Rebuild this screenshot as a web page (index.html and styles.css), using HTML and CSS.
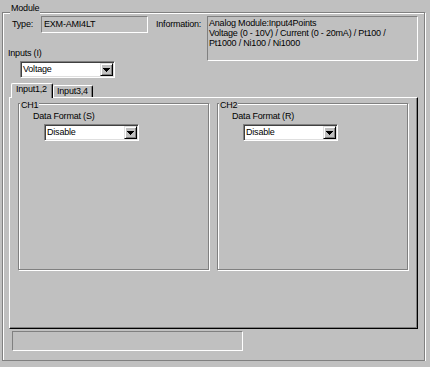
FILE: index.html
```html
<!DOCTYPE html>
<html lang="en">
<head>
  <meta charset="UTF-8">
  <title>Module</title>
  <link rel="stylesheet" href="styles.css">
</head>
<body>
  <div class="module group">
    <span class="caption module-caption">Module</span>

    <div class="top">
      <div class="left-col">
        <div class="type-row">
          <span class="type-label">Type:</span>
          <div class="readonly type-box">EXM-AMI4LT</div>
        </div>
        <div class="inputs-label">Inputs (I)</div>
        <div class="combo input-combo">
          <span class="combo-text">Voltage</span>
          <span class="combo-btn"><svg width="7" height="4" viewBox="0 0 7 4"><path d="M0 0h7L3.5 4z" fill="#000"/></svg></span>
        </div>
      </div>
      <span class="info-label">Information:</span>
      <div class="readonly info-box">Analog Module:Input4Points<br>Voltage (0 - 10V) / Current (0 - 20mA) / Pt100 /<br>Pt1000 / Ni100 / Ni1000</div>
    </div>

    <div class="tabs">
      <div class="tab active">Input1,2</div>
      <div class="tab">Input3,4</div>
    </div>

    <div class="pane">
      <div class="group ch">
        <span class="caption ch-caption">CH1</span>
        <div class="field-label">Data Format (S)</div>
        <div class="combo ch-combo">
          <span class="combo-text">Disable</span>
          <span class="combo-btn"><svg width="7" height="4" viewBox="0 0 7 4"><path d="M0 0h7L3.5 4z" fill="#000"/></svg></span>
        </div>
      </div>
      <div class="group ch">
        <span class="caption ch-caption">CH2</span>
        <div class="field-label">Data Format (R)</div>
        <div class="combo ch-combo">
          <span class="combo-text">Disable</span>
          <span class="combo-btn"><svg width="7" height="4" viewBox="0 0 7 4"><path d="M0 0h7L3.5 4z" fill="#000"/></svg></span>
        </div>
      </div>
    </div>

    <div class="readonly status"></div>
  </div>
</body>
</html>
```

FILE: styles.css
```css
* {
  box-sizing: border-box;
}
body {
  margin: 0;
  background: #c0c0c0;
  font-family: "Liberation Sans", Arial, sans-serif;
  font-size: 9px;
  line-height: 10px;
  letter-spacing: -0.2px;
  color: #000;
}

/* etched group box */
.group {
  position: relative;
  border: 1px solid #808080;
  box-shadow: 1px 1px 0 #fff, inset 1px 1px 0 #fff;
}
.caption {
  position: absolute;
  padding: 0 1px;
  line-height: 11px;
  background: #c0c0c0;
}
.module {
  margin: 12px 0 0 2px;
  width: 423px;
  height: 349px;
}
.module-caption {
  top: -10px;
  left: 7px;
}

.readonly {
  background: #c0c0c0;
  border: 1px solid;
  border-color: #808080 #fff #fff #808080;
}

.top {
  display: flex;
  align-items: flex-start;
  margin-top: 3px;
  padding-left: 5px;
}
.left-col {
  width: 140px;
}
.type-row {
  display: flex;
  padding-left: 4px;
}
.type-label {
  width: 29px;
  line-height: 17px;
}
.type-box {
  width: 107px;
  height: 17px;
  line-height: 15px;
  padding-left: 2px;
}
.inputs-label {
  margin-top: 15px;
}
.info-label {
  width: 51px;
  margin-left: 8px;
  line-height: 17px;
}
.info-box {
  width: 211px;
  height: 45px;
  padding: 1px 0 0 1px;
  white-space: nowrap;
}

/* combo box */
.combo {
  display: flex;
  width: 95px;
  height: 17px;
  margin-top: 3px;
  padding: 1px;
  background: #fff;
  border: 1px solid;
  border-color: #808080 #fff #fff #808080;
  box-shadow: inset 1px 1px 0 #404040, inset -1px -1px 0 #dfdfdf;
}
.input-combo {
  margin-left: 12px;
}
.ch-combo {
  margin-left: 11px;
}
.combo-text {
  flex: 1;
  padding-left: 1px;
  line-height: 13px;
}
.combo-btn {
  display: flex;
  align-items: center;
  justify-content: center;
  width: 13px;
  height: 13px;
  background: #c0c0c0;
  border: 1px solid;
  border-color: #dfdfdf #000 #000 #dfdfdf;
  box-shadow: inset 1px 1px 0 #fff, inset -1px -1px 0 #808080;
}
.combo-btn svg {
  display: block;
  shape-rendering: crispEdges;
}

/* tabs */
.tabs {
  display: flex;
  align-items: flex-end;
  height: 14px;
  margin: 5px 0 0 8px;
}
.tab {
  width: 40px;
  height: 12px;
  padding-left: 3px;
  border: 1px solid;
  border-color: #fff #000 transparent #fff;
  border-bottom: none;
  border-radius: 2px 2px 0 0;
  box-shadow: inset -1px 0 0 #808080;
  background: #c0c0c0;
}
.tab.active {
  position: relative;
  z-index: 1;
  width: 42px;
  height: 15px;
  padding-left: 4px;
  margin-bottom: -1px;
}
.pane {
  display: flex;
  gap: 8px;
  margin-left: 6px;
  width: 409px;
  height: 232px;
  padding: 5px 0 0 8px;
  border: 1px solid;
  border-color: #fff #000 #000 #fff;
  box-shadow: inset -1px -1px 0 #808080;
}
.ch {
  width: 191px;
  height: 167px;
  padding-left: 14px;
}
.ch-caption {
  top: -4px;
  left: 1px;
}
.field-label {
  margin-top: 7px;
}

.status {
  width: 231px;
  height: 20px;
  margin: 2px 0 0 9px;
}
```
